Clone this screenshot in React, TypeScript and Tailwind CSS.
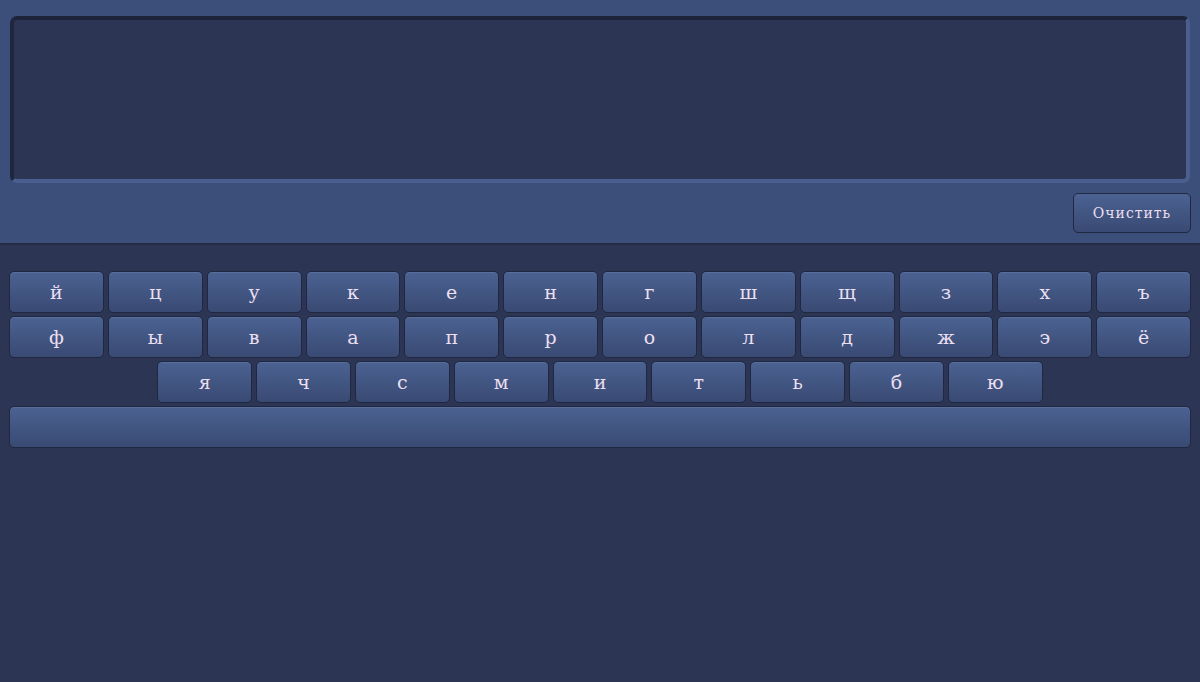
import React from "react";

const rows = [
  ["й", "ц", "у", "к", "е", "н", "г", "ш", "щ", "з", "х", "ъ"],
  ["ф", "ы", "в", "а", "п", "р", "о", "л", "д", "ж", "э", "ё"],
];
const lastRow = ["я", "ч", "с", "м", "и", "т", "ь", "б", "ю"];

const keyClass =
  "h-[42px] rounded-[5px] border border-[#1f2840] bg-gradient-to-b from-[#4b6292] to-[#394a73] text-[19px] text-[#ecdff0] shadow-[inset_0_1px_0_rgba(255,255,255,0.08)]";

export default function App() {
  return (
    <div className="min-h-[682px] bg-[#2c3654] font-['DejaVu_Serif','Liberation_Serif',serif]">
      <div className="border-b-2 border-[#232b45] bg-[#3c4f7a] px-[10px] pt-4 pb-[10px]">
        <div className="h-[167px] rounded-[7px] border-4 border-t-[#1d2338] border-l-[#1f263d] border-r-[#4a5f90] border-b-[#4a5f90] bg-[#2c3654]" />
        <div className="mt-[10px] flex justify-end">
          <button className="-mr-[1px] h-[40px] w-[118px] rounded-[5px] border border-[#1f2840] bg-gradient-to-b from-[#4b6292] to-[#394a73] text-[14px] tracking-[1px] text-[#ecdff0]">
            Очистить
          </button>
        </div>
      </div>
      <div className="flex flex-col gap-[3px] px-[9px] pt-[26px]">
        {rows.map((row, i) => (
          <div key={i} className="grid grid-cols-12 gap-x-[4px]">
            {row.map((k) => (
              <button key={k} className={keyClass}>
                {k}
              </button>
            ))}
          </div>
        ))}
        <div className="flex justify-center gap-[4px]">
          {lastRow.map((k) => (
            <button key={k} className={`${keyClass} w-[94.8px]`}>
              {k}
            </button>
          ))}
        </div>
        <button className={`${keyClass} w-full`} />
      </div>
    </div>
  );
}
